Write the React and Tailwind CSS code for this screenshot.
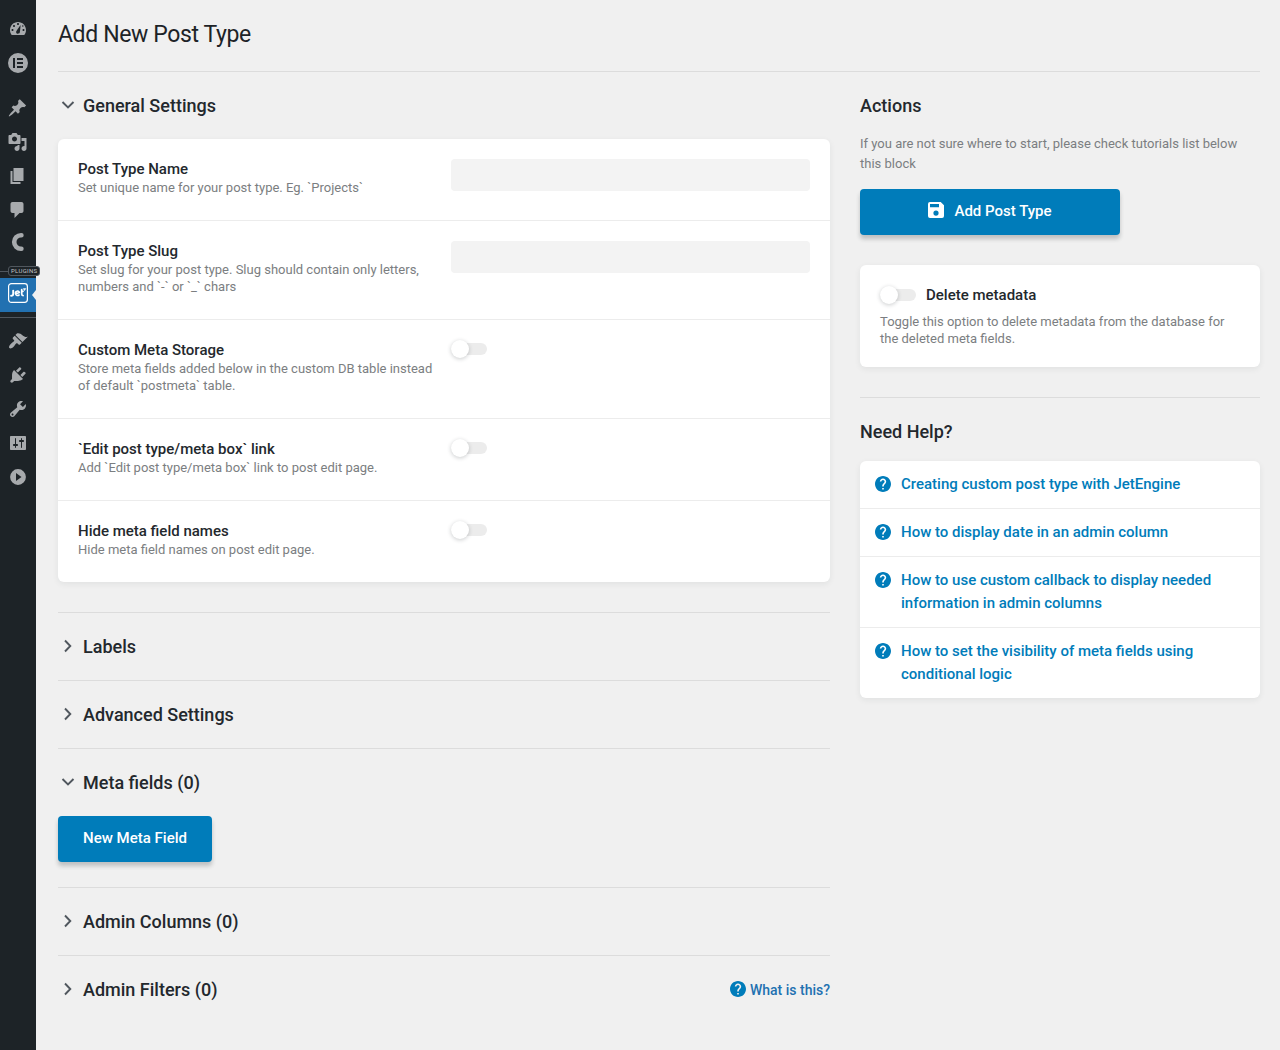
import { useState } from 'react';

const MENU_TOP = [
  { key: 'dashboard', d: 'M3.76 17h12.48c1.1-1.37 1.76-3.11 1.76-5 0-4.42-3.58-8-8-8s-8 3.58-8 8c0 1.89.66 3.63 1.76 5zM9 6c0-.55.45-1 1-1s1 .45 1 1-.45 1-1 1-1-.45-1-1zM5 8c0-.55.45-1 1-1s1 .45 1 1-.45 1-1 1-1-.45-1-1zM8.2 13.4C8.500 12.800 12.600 7 12.600 7s-.5 6.800-.8 7.600c-.4 1-1.400 1.400-2.400 1.100-1-.4-1.500-1.400-1.200-2.300zM3.500 12c0-.55.45-1 1-1s1 .45 1 1-.45 1-1 1-1-.45-1-1zM14.500 12c0-.55.45-1 1-1s1 .45 1 1-.45 1-1 1-1-.45-1-1zM14 8c0-.4.3-.8.8-.8s.8.4.8.8-.3.8-.8.8-.8-.4-.8-.8z' },
];

const MENU_CONTENT = [
  { key: 'posts', d: 'M10.44 3.02l1.82-1.82 6.36 6.35-1.83 1.82c-1.05-.68-2.48-.57-3.41.36l-.75.75c-.92.93-1.04 2.35-.35 3.41l-1.83 1.82-2.41-2.41-2.8 2.79c-.42.42-3.38 2.71-3.8 2.29s1.86-3.39 2.28-3.81l2.79-2.79L4.1 9.36l1.83-1.82c1.05.69 2.48.57 3.4-.36l.75-.75c.93-.92 1.05-2.35.36-3.41z' },
  { key: 'media', d: 'M13 11V4c0-.55-.45-1-1-1h-1.67L9 1H5L3.67 3H2c-.55 0-1 .45-1 1v7c0 .55.45 1 1 1h10c.55 0 1-.45 1-1zM7 4.5c1.38 0 2.5 1.12 2.5 2.5S8.38 9.5 7 9.5 4.5 8.38 4.5 7 5.62 4.5 7 4.5zM14 6h5v10.5c0 1.38-1.12 2.5-2.5 2.5S14 17.88 14 16.5s1.12-2.5 2.5-2.5c.17 0 .34.02.5.05V9h-3V6zm-4 8.05V13h2v3.5c0 1.38-1.12 2.5-2.5 2.5S7 17.88 7 16.5 8.12 14 9.5 14c.17 0 .34.02.5.05z' },
  { key: 'pages', d: 'M6 15V2h10v13H6zm-1 1h8v2H3V5h2v11z' },
  { key: 'comments', d: 'M5 2h9c1.1 0 2 .9 2 2v7c0 1.1-.9 2-2 2h-2l-5 5v-5H5c-1.1 0-2-.9-2-2V4c0-1.1.9-2 2-2z' },
];

const MENU_ADMIN = [
  { key: 'appearance', d: 'M14.48 11.06L7.41 3.99l1.5-1.5c.5-.56 2.3-.47 3.51.32 1.21.8 1.43 1.28 2.91 2.1 1.18.64 2.45 1.26 4.45.85zm-.71.71L6.7 4.7 4.93 6.47c-.39.39-.39 1.02 0 1.41l1.06 1.06c.39.39.39 1.03 0 1.42-.6.6-1.43 1.11-2.21 1.69-.35.26-.7.53-1.01.84C1.43 14.23.4 16.08 1.4 17.07c.99 1 2.84-.03 4.18-1.36.31-.31.58-.66.85-1.02.57-.78 1.08-1.61 1.69-2.21.39-.39 1.02-.39 1.41 0l1.06 1.06c.39.39 1.02.39 1.41 0z' },
  { key: 'plugins', d: 'M13.11 4.36L9.87 7.6 8 5.73l3.24-3.24c.35-.34 1.05-.2 1.56.32.52.51.66 1.21.31 1.55zm-8 1.77l.91-1.12 9.01 9.01-1.19.84c-.71.71-2.63 1.16-3.82 1.16H6.14L4.9 17.26c-.59.59-1.54.59-2.12 0-.59-.58-.59-1.53 0-2.12l1.24-1.24v-3.88c0-1.13.4-3.19 1.09-3.89zm7.26 3.97l3.24-3.24c.34-.35 1.04-.21 1.55.31.52.51.66 1.21.31 1.55l-3.24 3.25z' },
  { key: 'tools', d: 'M16.68 9.77c-1.34 1.34-3.3 1.67-4.95.99l-5.41 6.52c-.99.99-2.59.99-3.58 0s-.99-2.59 0-3.57l6.52-5.42c-.68-1.65-.35-3.61.99-4.95 1.28-1.28 3.12-1.62 4.72-1.06l-2.89 2.89 2.82 2.82 2.86-2.87c.53 1.58.18 3.39-1.08 4.65zM3.81 16.21c.4.39 1.04.39 1.43 0 .4-.4.4-1.04 0-1.43-.39-.4-1.03-.4-1.43 0-.39.39-.39 1.03 0 1.43z' },
  { key: 'settings', d: 'M18 16V4c0-.55-.45-1-1-1H3c-.55 0-1 .45-1 1v12c0 .55.45 1 1 1h14c.55 0 1-.45 1-1zM8 11h1c.55 0 1 .45 1 1s-.45 1-1 1H8v1.5c0 .28-.22.5-.5.5s-.5-.22-.5-.5V13H6c-.55 0-1-.45-1-1s.45-1 1-1h1V5.5c0-.28.22-.5.5-.5s.5.22.5.5V11zm5-2h-1c-.55 0-1-.45-1-1s.45-1 1-1h1V5.5c0-.28.22-.5.5-.5s.5.22.5.5V7h1c.55 0 1 .45 1 1s-.45 1-1 1h-1v5.5c0 .28-.22.5-.5.5s-.5-.22-.5-.5V9z' },
  { key: 'collapse', d: 'M10 2.100a7.900 7.900 0 1 0 0 15.800 7.900 7.900 0 0 0 0-15.800zM8 14V6l5.500 4z' },
];

const SETTINGS = [
  { key: 'name', type: 'text', label: 'Post Type Name', desc: 'Set unique name for your post type. Eg. `Projects`' },
  { key: 'slug', type: 'text', label: 'Post Type Slug', desc: 'Set slug for your post type. Slug should contain only letters, numbers and `-` or `_` chars' },
  { key: 'custom_storage', type: 'switch', label: 'Custom Meta Storage', desc: 'Store meta fields added below in the custom DB table instead of default `postmeta` table.' },
  { key: 'show_edit_link', type: 'switch', label: '`Edit post type/meta box` link', desc: 'Add `Edit post type/meta box` link to post edit page.' },
  { key: 'hide_field_names', type: 'switch', label: 'Hide meta field names', desc: 'Hide meta field names on post edit page.' },
];

const HELP_LINKS = [
  'Creating custom post type with JetEngine',
  'How to display date in an admin column',
  'How to use custom callback to display needed information in admin columns',
  'How to set the visibility of meta fields using conditional logic',
];

export default function App() {
  const [values, setValues] = useState({});
  const [open, setOpen] = useState({ general: true, meta: true });
  const [deleteMeta, setDeleteMeta] = useState(false);

  const setValue = (key, value) => setValues(v => ({ ...v, [key]: value }));
  const toggle = (key) => setOpen(o => ({ ...o, [key]: !o[key] }));

  return (
    <div className="flex min-h-[1050px] bg-[#f0f0f0] font-['Roboto',sans-serif] text-[#23282d]">
      <Sidebar />

      <main className="flex-1 pl-[22px] pr-5">
        <h1 className="h-[71px] pt-5 text-[23px] leading-[30px] font-normal tracking-[-0.38px] text-[#1d2327]">Add New Post Type</h1>

        <div className="flex gap-[30px] border-t border-[#dcdcdc]">
          <div className="w-[772px] shrink-0">
            <Section title="General Settings" open={open.general} onToggle={() => toggle('general')} first>
              <div className="mb-[30px] rounded-md bg-white shadow-[0_2px_6px_rgba(35,40,45,0.07)]">
                {SETTINGS.map(s => (
                  <div key={s.key} className="flex border-t border-[#ececec] px-5 pt-5 pb-6 first:border-t-0">
                    <div className="w-[373px] shrink-0 pr-3">
                      <p className="text-[15px] leading-5 font-medium">{s.label}</p>
                      <p className="text-[13px] leading-[17px] text-[#7b7e81]">{s.desc}</p>
                    </div>
                    {s.type === 'text' ? (
                      <input
                        type="text"
                        value={values[s.key] || ''}
                        onChange={e => setValue(s.key, e.target.value)}
                        className="h-8 min-w-0 flex-1 rounded bg-[#f3f3f3] px-2 text-[13px] outline-none"
                      />
                    ) : (
                      <div className="flex h-[18px] items-center">
                        <Switch on={values[s.key]} onChange={v => setValue(s.key, v)} />
                      </div>
                    )}
                  </div>
                ))}
              </div>
            </Section>

            <Section title="Labels" open={open.labels} onToggle={() => toggle('labels')} />
            <Section title="Advanced Settings" open={open.advanced} onToggle={() => toggle('advanced')} />

            <Section title="Meta fields (0)" open={open.meta} onToggle={() => toggle('meta')}>
              <div className="pb-[25px]">
                <button className="h-[46px] w-[154px] rounded bg-[#007cba] pb-px text-[15px] font-medium text-white shadow-[0_4px_4px_rgba(35,40,45,0.24)]">
                  New Meta Field
                </button>
              </div>
            </Section>

            <Section title="Admin Columns (0)" open={open.columns} onToggle={() => toggle('columns')} />
            <Section
              title="Admin Filters (0)"
              open={open.filters}
              onToggle={() => toggle('filters')}
              extra={
                <a href="#" className="flex items-center gap-1 text-sm font-medium text-[#2271b1]">
                  <span className="pb-0.5"><HelpIcon /></span>What is this?
                </a>
              }
            />
          </div>

          {/* Right column */}
          <aside className="w-[400px] shrink-0">
            <h2 className="flex h-[62px] items-center pt-[5px] text-lg font-medium">Actions</h2>
            <p className="text-[13px] leading-5 text-[#7b7e81]">
              If you are not sure where to start, please check tutorials list below this block
            </p>
            <button className="mt-[15px] flex h-[46px] w-[260px] items-center justify-center gap-[10px] rounded bg-[#007cba] pb-px text-[15px] font-medium text-white shadow-[0_4px_4px_rgba(35,40,45,0.24)]">
              <span className="pb-[3px]"><SaveIcon /></span>
              Add Post Type
            </button>

            <div className="mt-[30px] rounded-md bg-white p-5 shadow-[0_2px_6px_rgba(35,40,45,0.07)]">
              <div className="mb-2 flex h-5 items-center gap-[10px]">
                <Switch on={deleteMeta} onChange={setDeleteMeta} />
                <span className="text-[15px] font-medium">Delete metadata</span>
              </div>
              <p className="text-[13px] leading-[17px] text-[#7b7e81]">
                Toggle this option to delete metadata from the database for the deleted meta fields.
              </p>
            </div>

            <h2 className="mt-[30px] flex h-16 items-center border-t border-[#dcdcdc] pt-1 text-lg font-medium">Need Help?</h2>
            <ul className="rounded-md bg-white shadow-[0_2px_6px_rgba(35,40,45,0.07)]">
              {HELP_LINKS.map(text => (
                <li key={text} className="border-t border-[#ececec] first:border-t-0">
                  <a href="#" className="flex gap-[10px] px-[15px] py-3 text-[15px] leading-[23px] font-medium text-[#007cba]">
                    <span className="flex h-[22px] items-center"><HelpIcon /></span>
                    <span>{text}</span>
                  </a>
                </li>
              ))}
            </ul>
          </aside>
        </div>
      </main>
    </div>
  );
}

function Section({ title, open, onToggle, extra, first, children }) {
  return (
    <section className={first ? '' : 'border-t border-[#dcdcdc]'}>
      <div className="flex h-[67px] items-center justify-between">
        <button onClick={onToggle} className="flex items-center text-lg font-medium">
          <svg className="mr-[5px] size-5" viewBox="0 0 20 20" fill="none" stroke="#50575e" strokeWidth="1.900">
            {open ? <path d="M4.500 6l5.500 5.500L15.500 6" /> : <path d="M7 3.500l5.300 5.500L7 14.500" />}
          </svg>
          {title}
        </button>
        {extra}
      </div>
      {open && children}
    </section>
  );
}

function Switch({ on, onChange }) {
  return (
    <button onClick={() => onChange(!on)} className={`flex h-3 w-9 items-center rounded-full bg-[#ececec] ${on ? 'justify-end' : ''}`}>
      <span className="size-[18px] shrink-0 rounded-full bg-white shadow-[0_1px_4px_rgba(35,40,45,0.24)]" />
    </button>
  );
}

function Sidebar() {
  return (
    <nav className="w-9 shrink-0 bg-[#1d2327] pt-[11px] text-[#a7aaad]">
      {MENU_TOP.map(m => <MenuItem key={m.key} d={m.d} />)}
      <div className="flex h-[34px] items-center justify-center pt-px">
        {/* Elementor */}
        <svg width="20" height="20" viewBox="0 0 20 20" fill="currentColor">
          <path fillRule="evenodd" d="M10 0a10 10 0 1 0 0 20 10 10 0 0 0 0-20zM5 5h2v10H5zM9 5h6v2H9zM9 9h6v2H9zM9 13h6v2H9z" />
        </svg>
      </div>
      <div className="h-3" />
      {MENU_CONTENT.map(m => <MenuItem key={m.key} d={m.d} shifted />)}
      <div className="flex h-[34px] justify-center pt-[5px]">
        {/* Crocoblock */}
        <svg width="20" height="20" viewBox="0 0 20 20" fill="none" stroke="currentColor" strokeWidth="4.600">
          <path d="M13.400 3.200h-.4a6.800 6.800 0 0 0 0 13.600h.4" strokeLinecap="round" />
        </svg>
      </div>

      <div className="relative h-[17px] pt-[10px]">
        <div className="h-px bg-[#50575e]" />
        <span className="absolute top-[5px] left-2 h-[10px] rounded-[3px] border border-[#50575e] bg-[#1d2327] px-[2px] text-[6px] leading-[8px] tracking-[0.3px] text-[#c3c4c7]">
          PLUGINS
        </span>
      </div>

      <div className="relative flex h-[34px] justify-center bg-[#2271b1] pt-[5px]">
        <svg width="20" height="20" viewBox="0 0 20 20" fill="none" stroke="#fff" strokeLinecap="round" strokeLinejoin="round">
          <rect x=".6" y=".6" width="18.800" height="18.800" rx="2.800" strokeWidth="1.200" />
          <path d="M5.200 7.600v3.300c0 1.200-.7 1.800-2.100 1.800" strokeWidth="1.900" />
          <path d="M7.800 10.700l3.600-1.100c-.4-1.300-1.500-1.800-2.500-1.400-1.200.4-1.700 1.500-1.300 2.800.5 1.400 2.200 1.900 3.500 1" strokeWidth="1.600" />
          <path d="M13.700 6.500v4.600c0 1 .5 1.500 1.400 1.500M13.700 8.300h1.300" strokeWidth="1.700" />
          <path d="M15.500 5.600h2.300l-1.200 1.900z" fill="#fff" strokeWidth=".5" />
        </svg>
        <span className="absolute top-3 right-0 border-y-[5px] border-r-[4px] border-y-transparent border-r-[#f0f0f0]" />
      </div>

      <div className="h-3 pt-[5px]">
        <div className="h-px bg-[#50575e]" />
      </div>
      {MENU_ADMIN.map(m => <MenuItem key={m.key} d={m.d} />)}
    </nav>
  );
}

function MenuItem({ d, shifted }) {
  return (
    <div className="flex h-[34px] items-center justify-center">
      <svg width="20" height="20" viewBox={shifted ? '0.5 0 20 20' : '0 0 20 20'} fill="currentColor">
        <path fillRule="evenodd" d={d} />
      </svg>
    </div>
  );
}

function HelpIcon() {
  return (
    <svg className="size-4 shrink-0" viewBox="2 2 20 20" fill="#007cba">
      <path d="M12 2C6.480 2 2 6.480 2 12s4.480 10 10 10 10-4.480 10-10S17.520 2 12 2zm1 17h-2v-2h2v2zm2.070-7.750l-.9.920C13.450 12.900 13 13.500 13 15h-2v-.5c0-1.100.45-2.100 1.170-2.830l1.240-1.260c.37-.36.59-.86.59-1.410 0-1.100-.9-2-2-2s-2 .9-2 2H8c0-2.210 1.790-4 4-4s4 1.790 4 4c0 .88-.36 1.680-.93 2.250z" />
    </svg>
  );
}

function SaveIcon() {
  return (
    <svg className="size-4" viewBox="0 0 16 16" fill="#fff">
      <path fillRule="evenodd" d="M2 0h10.700L16 3.300V14a2 2 0 0 1-2 2H2a2 2 0 0 1-2-2V2a2 2 0 0 1 2-2zM2 2v3.300h9V2zM8 8.500a2.600 2.600 0 1 0 0 5.200 2.600 2.600 0 0 0 0-5.200z" />
    </svg>
  );
}
